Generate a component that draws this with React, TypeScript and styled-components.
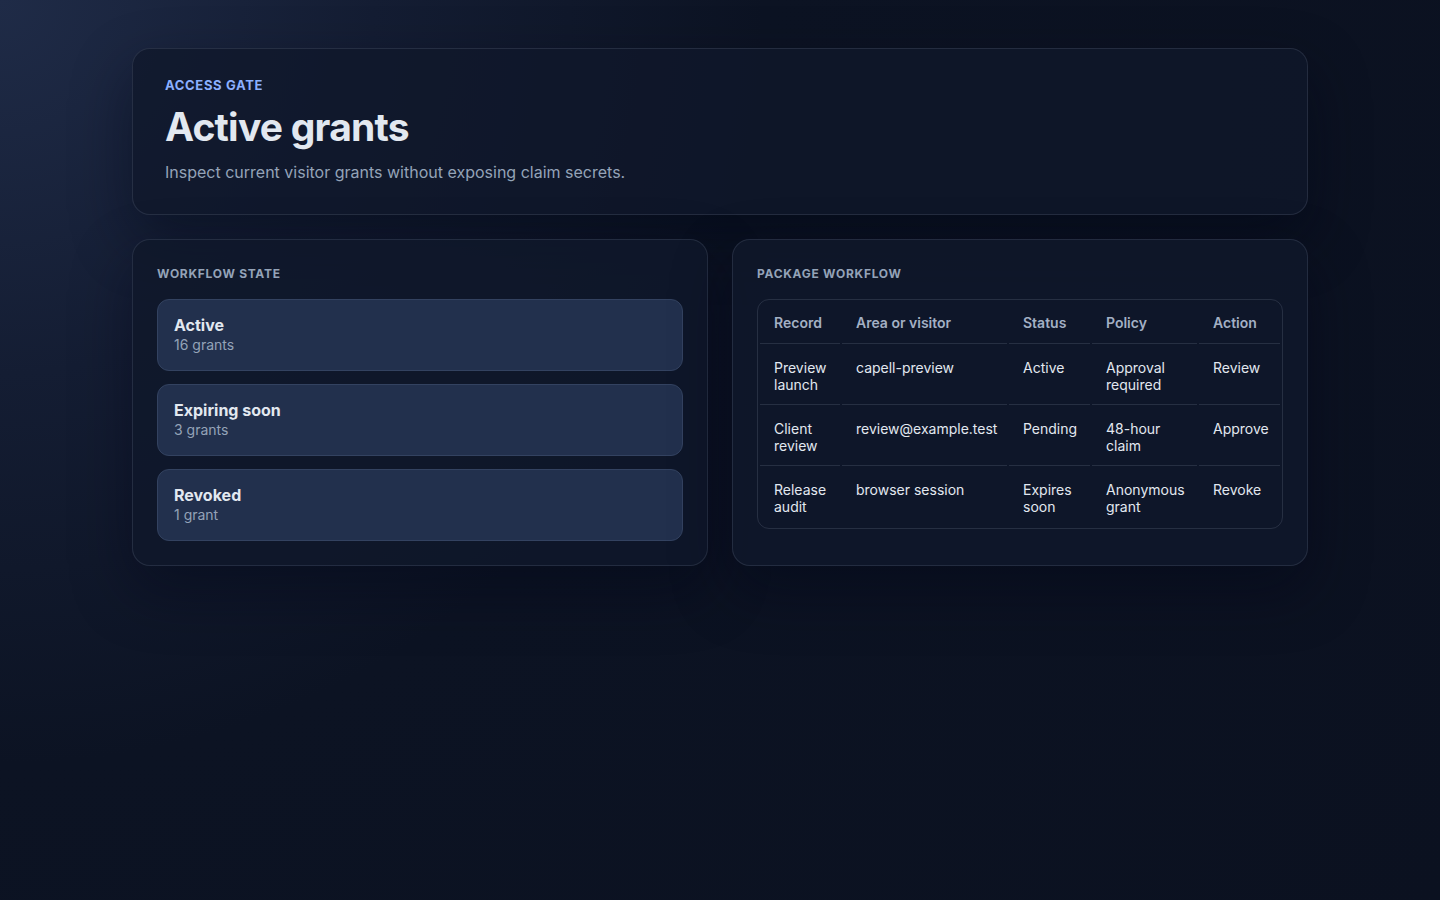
import React from "react";
import styled, { createGlobalStyle } from "styled-components";

const GlobalStyle = createGlobalStyle`
  html, body {
    margin: 0;
    min-height: 100%;
  }
  body {
    font-family: Inter, "Noto Sans", "Liberation Sans", sans-serif;
    color: #e2e8f0;
    background-color: #0b1120;
    background-image: radial-gradient(
      circle at 0% 0%,
      #1f2b47 0%,
      #141d33 22%,
      #0c1323 45%,
      #0b1120 100%
    );
    background-attachment: fixed;
    min-height: 900px;
  }
`;

const Page = styled.main`
  max-width: 1176px;
  margin: 0 auto;
  padding: 48px 0;
  display: flex;
  flex-direction: column;
  gap: 24px;
`;

const Hero = styled.header`
  background: rgba(15, 23, 42, 0.78);
  border: 1px solid rgba(148, 163, 184, 0.16);
  border-radius: 18px;
  padding: 28px 32px 32px;
  box-shadow: 0 24px 60px rgba(2, 6, 23, 0.45);
`;

const Eyebrow = styled.div`
  font-size: 13px;
  font-weight: 700;
  letter-spacing: 0.05em;
  text-transform: uppercase;
  color: #8bb0ff;
`;

const Title = styled.h1`
  margin: 10px 0 0;
  font-size: 39px;
  line-height: 48px;
  font-weight: 700;
  letter-spacing: -0.02em;
  color: #e2e8f0;
`;

const Lead = styled.p`
  margin: 11px 0 0;
  font-size: 16px;
  color: #94a3b8;
`;

const Columns = styled.div`
  display: grid;
  grid-template-columns: minmax(0, 1fr) minmax(0, 1fr);
  gap: 24px;
`;

const Panel = styled.section`
  background: rgba(15, 23, 42, 0.85);
  border: 1px solid rgba(148, 163, 184, 0.16);
  border-radius: 18px;
  padding: 24px;
  box-shadow: 0 24px 60px rgba(2, 6, 23, 0.4);
`;

const PanelLabel = styled.h2`
  margin: 2px 0 18px;
  font-size: 12px;
  font-weight: 700;
  letter-spacing: 0.06em;
  text-transform: uppercase;
  color: #94a3b8;
`;

const StateList = styled.div`
  display: flex;
  flex-direction: column;
  gap: 13px;
`;

const StateCard = styled.div`
  background: #22304d;
  border: 1px solid #334260;
  border-radius: 12px;
  padding: 14px 16px 16px;
`;

const StateName = styled.div`
  font-size: 16px;
  font-weight: 700;
  line-height: 22px;
  color: #e2e8f0;
`;

const StateCount = styled.div`
  font-size: 14px;
  line-height: 18px;
  color: #94a3b8;
`;

const TableWrap = styled.div`
  border: 1px solid rgba(148, 163, 184, 0.18);
  border-radius: 12px;
  overflow: hidden;
`;

const Table = styled.table`
  width: 100%;
  table-layout: fixed;
  border-collapse: separate;
  border-spacing: 2px;
  font-size: 14px;
`;

const Th = styled.th<{ $w?: number }>`
  box-sizing: border-box;
  width: ${(p) => (p.$w ? `${p.$w}px` : "auto")};
  text-align: left;
  font-weight: 600;
  line-height: 17px;
  color: #a3b0c4;
  padding: 12px 14px;
  border-bottom: 1px solid rgba(148, 163, 184, 0.18);
  white-space: nowrap;
`;

const Td = styled.td<{ $last?: boolean }>`
  text-align: left;
  vertical-align: top;
  color: #e2e8f0;
  line-height: 17px;
  padding: 13px 14px 11px;
  border-bottom: ${(p) => (p.$last ? "none" : "1px solid rgba(148, 163, 184, 0.18)")};
`;

const states = [
  { name: "Active", count: "16 grants" },
  { name: "Expiring soon", count: "3 grants" },
  { name: "Revoked", count: "1 grant" },
];

const columns = [
  { label: "Record", w: 80 },
  { label: "Area or visitor", w: 165 },
  { label: "Status", w: 81 },
  { label: "Policy", w: 105 },
  { label: "Action" },
];

const rows = [
  ["Preview launch", "capell-preview", "Active", "Approval required", "Review"],
  ["Client review", "review@example.test", "Pending", "48-hour claim", "Approve"],
  ["Release audit", "browser session", "Expires soon", "Anonymous grant", "Revoke"],
];

export default function App() {
  return (
    <>
      <GlobalStyle />
      <Page>
        <Hero>
          <Eyebrow>Access gate</Eyebrow>
          <Title>Active grants</Title>
          <Lead>Inspect current visitor grants without exposing claim secrets.</Lead>
        </Hero>
        <Columns>
          <Panel>
            <PanelLabel>Workflow state</PanelLabel>
            <StateList>
              {states.map((s) => (
                <StateCard key={s.name}>
                  <StateName>{s.name}</StateName>
                  <StateCount>{s.count}</StateCount>
                </StateCard>
              ))}
            </StateList>
          </Panel>
          <Panel>
            <PanelLabel>Package workflow</PanelLabel>
            <TableWrap>
              <Table>
                <thead>
                  <tr>
                    {columns.map((c) => (
                      <Th key={c.label} $w={c.w}>
                        {c.label}
                      </Th>
                    ))}
                  </tr>
                </thead>
                <tbody>
                  {rows.map((r, i) => (
                    <tr key={r[0]}>
                      {r.map((c, j) => (
                        <Td key={j} $last={i === rows.length - 1}>
                          {c}
                        </Td>
                      ))}
                    </tr>
                  ))}
                </tbody>
              </Table>
            </TableWrap>
          </Panel>
        </Columns>
      </Page>
    </>
  );
}
